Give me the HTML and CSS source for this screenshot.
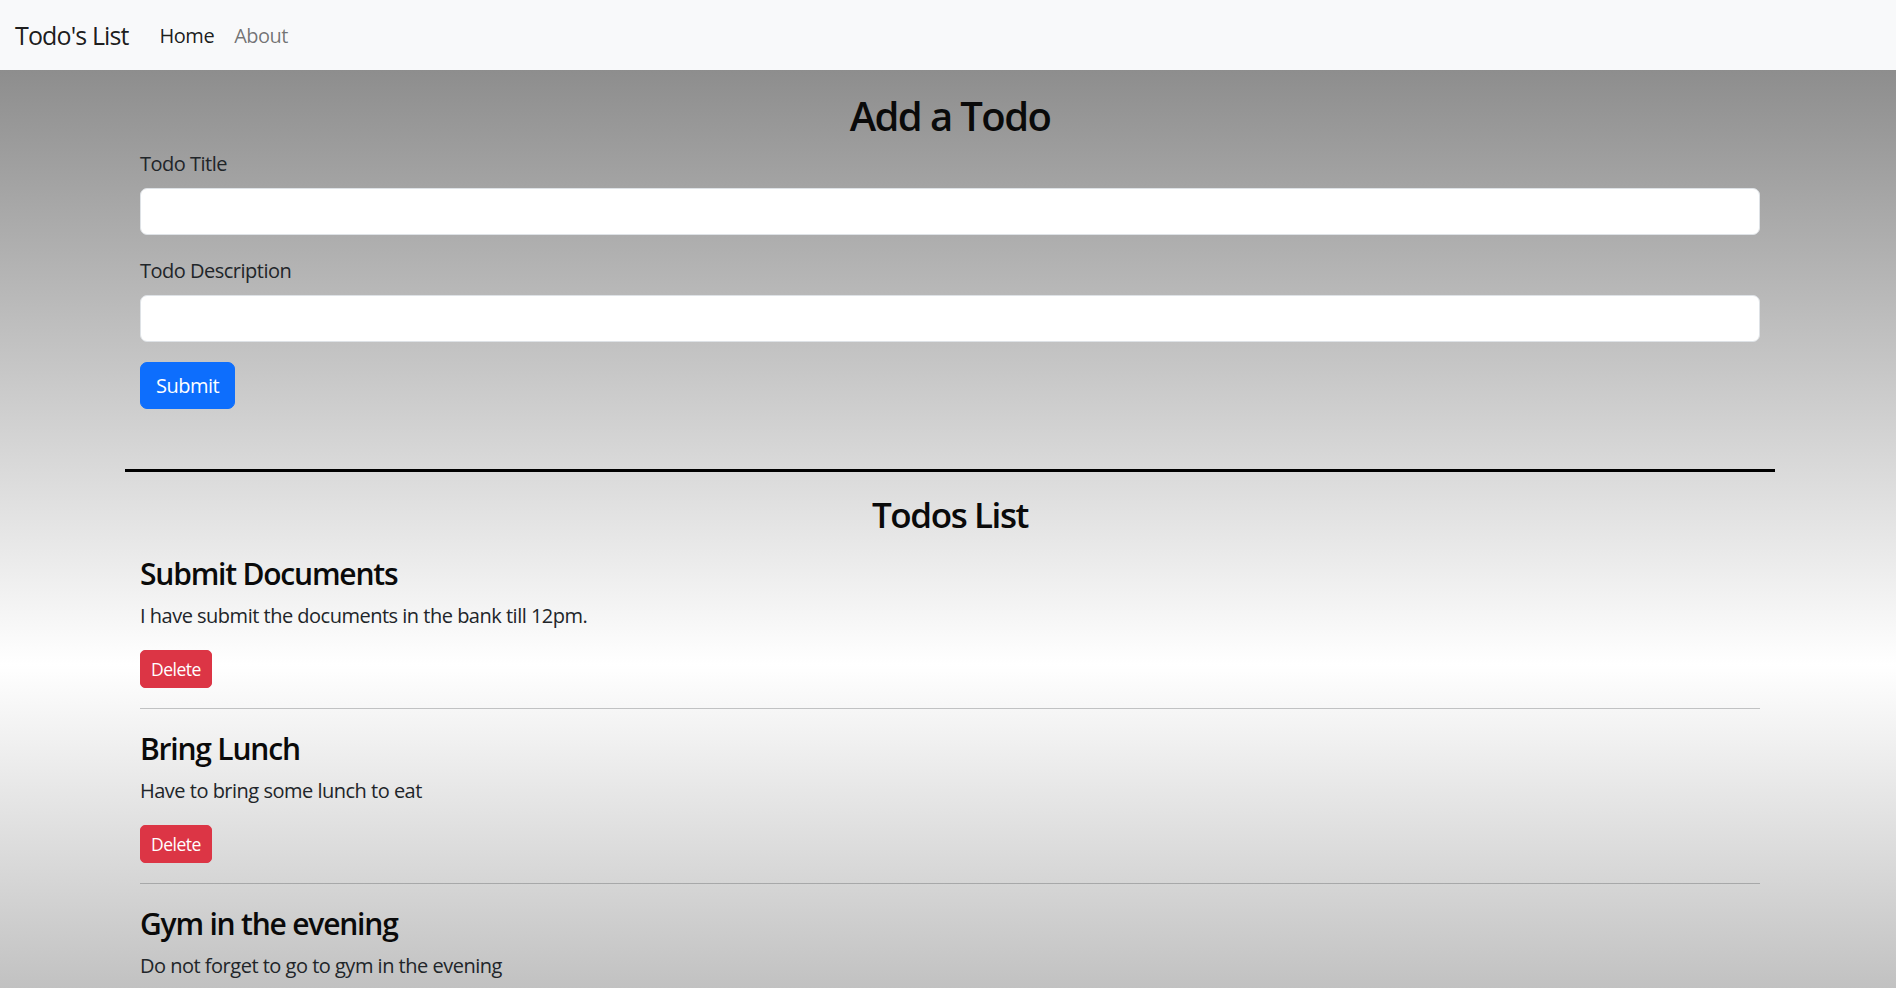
FILE: index.html
```html
<!DOCTYPE html>
<html lang="en">
<head>
<meta charset="utf-8">
<title>Todo's List</title>
<link rel="stylesheet" href="styles.css">
</head>
<body>
<nav class="navbar">
  <a class="brand" href="#">Todo's List</a>
  <ul class="nav-links">
    <li><a class="nav-link active" href="#">Home</a></li>
    <li><a class="nav-link" href="#">About</a></li>
  </ul>
</nav>

<div class="container form-section">
  <h2 class="page-title">Add a Todo</h2>
  <form class="todo-form">
    <div class="field">
      <label class="form-label" for="title">Todo Title</label>
      <input class="form-control" type="text" id="title">
    </div>
    <div class="field">
      <label class="form-label" for="desc">Todo Description</label>
      <input class="form-control" type="text" id="desc">
    </div>
    <button type="button" class="btn btn-primary">Submit</button>
  </form>
</div>

<hr class="divider">

<div class="container list-section">
  <h3 class="list-title">Todos List</h3>
  <div class="todo">
    <h4 class="todo-title">Submit Documents</h4>
    <p class="todo-desc">I have submit the documents in the bank till 12pm.</p>
    <button type="button" class="btn btn-sm btn-danger">Delete</button>
    <hr class="todo-sep">
  </div>
  <div class="todo">
    <h4 class="todo-title">Bring Lunch</h4>
    <p class="todo-desc">Have to bring some lunch to eat</p>
    <button type="button" class="btn btn-sm btn-danger">Delete</button>
    <hr class="todo-sep">
  </div>
  <div class="todo">
    <h4 class="todo-title">Gym in the evening</h4>
    <p class="todo-desc">Do not forget to go to gym in the evening</p>
    <button type="button" class="btn btn-sm btn-danger">Delete</button>
    <hr class="todo-sep">
  </div>
</div>
</body>
</html>
```

FILE: styles.css
```css
* { box-sizing: border-box; }

html, body {
  margin: 0;
  padding: 0;
}

body {
  font-family: "Open Sans", "Noto Sans", sans-serif;
  font-size: 20px;
  line-height: 1.5;
  color: #212529;
  letter-spacing: -0.025em;
  min-height: 1330px;
  background: linear-gradient(to bottom, #808080 0px, #ffffff 665px, #808080 1330px) no-repeat;
  background-color: #808080;
}

/* Navbar */
.navbar {
  display: flex;
  align-items: center;
  height: 70px;
  padding: 11px 15px 9px;
  background: #f8f9fa;
}

.brand {
  font-size: 25px;
  line-height: 37.5px;
  padding: 6px 0;
  margin-right: 21px;
  letter-spacing: -0.035em;
  color: rgba(0, 0, 0, 0.9);
  text-decoration: none;
}

.nav-links {
  display: flex;
  list-style: none;
  margin: 0;
  padding: 0;
}

.nav-link {
  display: block;
  padding: 10px 10px;
  line-height: 30px;
  color: rgba(0, 0, 0, 0.55);
  text-decoration: none;
}

.nav-link.active {
  color: rgba(0, 0, 0, 0.9);
}

/* Containers */
.container {
  width: 1650px;
  padding: 0 15px;
  margin-left: calc(50% - 823px);
}

.form-section {
  margin-top: 20px;
  padding-bottom: 40px;
}

.page-title {
  margin: 0 0 10px;
  padding-top: 2px;
  height: 50px;
  font-size: 40px;
  line-height: 48px;
  font-weight: 600;
  letter-spacing: -0.04em;
  color: #0a0a0a;
  text-align: center;
}

.todo-form {
  margin-top: -2px;
}

.field {
  margin-bottom: 20px;
}

.form-label {
  display: block;
  margin-bottom: 10px;
  padding-top: 1px;
  height: 30px;
  line-height: 30px;
}

.form-control {
  display: block;
  width: 100%;
  height: 47px;
  padding: 7.5px 15px;
  font: inherit;
  color: #212529;
  background: #fff;
  border: 1px solid #dee2e6;
  border-radius: 7px;
}

.btn {
  display: inline-block;
  font-family: inherit;
  letter-spacing: inherit;
  border: 1px solid transparent;
  color: #fff;
  cursor: pointer;
}

.btn-primary {
  height: 47px;
  padding: 0 15px;
  font-size: 20px;
  line-height: 30px;
  background: #0d6efd;
  border-color: #0d6efd;
  border-radius: 7px;
}

.btn-sm {
  height: 38px;
  padding: 0 10px;
  font-size: 17.5px;
  line-height: 26px;
  border-radius: 5px;
}

.btn-danger {
  background: #dc3545;
  border-color: #dc3545;
}

.divider {
  width: 1650px;
  margin: 20px 0 20px calc(50% - 823px);
  border: 0;
  border-top: 3px solid #000;
  height: 0;
}

.list-title {
  margin: 0 0 20px;
  padding-top: 2px;
  height: 42px;
  font-size: 35px;
  line-height: 42px;
  font-weight: 600;
  letter-spacing: -0.04em;
  color: #0a0a0a;
  text-align: center;
}

.todo-title {
  margin: 0 0 10px;
  padding-top: 2px;
  height: 36px;
  font-size: 30px;
  line-height: 36px;
  font-weight: 600;
  letter-spacing: -0.04em;
  color: #0a0a0a;
}

.todo-desc {
  margin: 0 0 20px;
  padding-top: 1px;
  height: 30px;
  line-height: 30px;
}

.todo-sep {
  margin: 20px 0;
  border: 0;
  border-top: 1px solid rgba(33, 37, 41, 0.25);
  height: 0;
}
```
